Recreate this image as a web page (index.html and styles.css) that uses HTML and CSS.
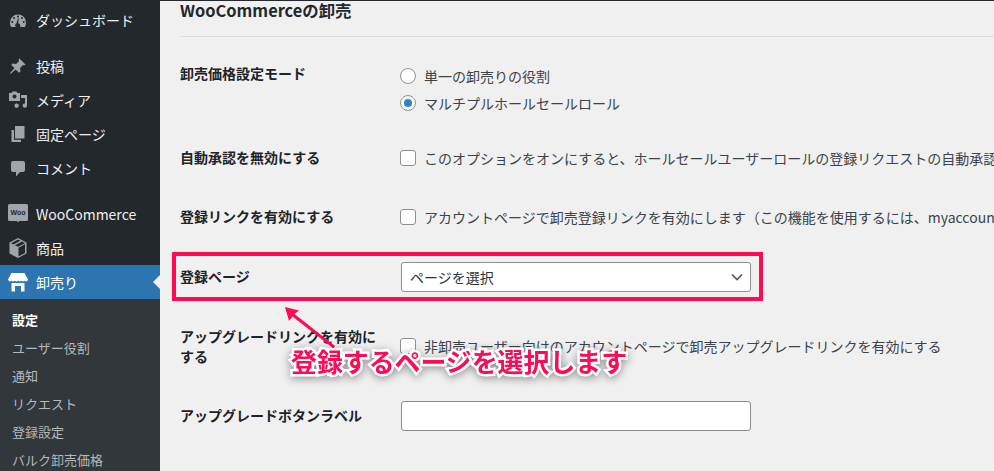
FILE: index.html
```html
<!DOCTYPE html>
<html lang="ja">
<head>
<meta charset="utf-8">
<title>WooCommerceの卸売</title>
<link rel="stylesheet" href="styles.css">
</head>
<body>
<div class="app">
  <nav class="sidebar">
    <ul class="menu">
      <li class="item first"><svg class="ico" viewBox="0 0 20 20"><path fill-rule="evenodd" d="M10 4.500a8 8 0 0 0-8 8c0 1.700.4 3.300 1.200 4.500h4.600a2.600 2.600 0 0 1 .7-3.700l1.500-5 .8.200-.6 4.800a2.600 2.600 0 0 1 1.900 3.700h4.700c.8-1.200 1.200-2.800 1.200-4.500a8 8 0 0 0-8-8zM6 7a1 1 0 1 1 0 2 1 1 0 0 1 0-2zM10 5.500a1 1 0 1 1 0 2 1 1 0 0 1 0-2zM14 7a1 1 0 1 1 0 2 1 1 0 0 1 0-2zM4.300 11a1 1 0 1 1 0 2 1 1 0 0 1 0-2zM15.700 11a1 1 0 1 1 0 2 1 1 0 0 1 0-2z"/></svg>ダッシュボード</li>
      <li class="item gap"><svg class="ico" viewBox="0 0 20 20"><path d="M11.500 2.500l6 6-1.500 1-1-.6-3 3 .5 3.600-1.500 1.200-3.300-3.300L2.500 18l-.6-.6 4.600-5.300-3.200-3.200 1.200-1.500 3.600.5 3-3-.6-1z"/></svg>投稿</li>
      <li class="item"><svg class="ico" viewBox="0 0 20 20"><path fill-rule="evenodd" d="M1 3h2.500l1-1.500h4L9.500 3H12v8H1zM6.500 4.500a2 2 0 1 0 .01 0zM13 5h6v10.500a2.200 2.200 0 1 1-2-2.100V8h-4zM9 13.500a2.200 2.200 0 1 1-2.500 2.500 2.200 2.200 0 0 1 2.500-2.500z"/></svg>メディア</li>
      <li class="item"><svg class="ico" viewBox="0 0 20 20"><path d="M7 2h9.500v12.500H7zM3.500 6H6v9.800h7V18H3.500z"/></svg>固定ページ</li>
      <li class="item"><svg class="ico" viewBox="0 0 20 20"><path d="M5 3h10a2 2 0 0 1 2 2v7a2 2 0 0 1-2 2h-3l-4 4.500V14H5a2 2 0 0 1-2-2V5a2 2 0 0 1 2-2z"/></svg>コメント</li>
      <li class="item gap"><svg class="ico woo" viewBox="0 0 20 20"><path d="M1.500 0h17A1.500 1.500 0 0 1 20 1.500v14a1.500 1.500 0 0 1-1.500 1.500H11l-1 1.500L9 17H1.500A1.500 1.500 0 0 1 0 15.500v-14A1.500 1.500 0 0 1 1.500 0z"/><text x="10" y="11" class="woo-text">Woo</text></svg>WooCommerce</li>
      <li class="item"><svg class="ico" viewBox="0 0 20 20"><path fill-rule="evenodd" d="M10 0l8.500 4.500v11L10 20l-8.500-4.500v-11zM3 5.200l7 3.600 7-3.600-3-1.600-7 3.600-1.600-.8 7-3.600L10 1.600zM10.500 9.800v8.600l6.500-3.500V6.300z"/></svg>商品</li>
      <li class="item active"><svg class="ico shop" viewBox="0 0 20 20"><path fill-rule="evenodd" d="M3.500 1h13L20 7.500a2 2 0 0 1-3.500 1.200 2.400 2.400 0 0 1-3.300 0 2.400 2.400 0 0 1-3.200 0 2.400 2.400 0 0 1-3.200 0 2.400 2.400 0 0 1-3.300 0A2 2 0 0 1 0 7.500zM3.500 11h13v8.500h-3.500V14H7v5.500H3.500z"/></svg>卸売り</li>
    </ul>
    <ul class="submenu">
      <li class="sub current">設定</li>
      <li class="sub">ユーザー役割</li>
      <li class="sub">通知</li>
      <li class="sub">リクエスト</li>
      <li class="sub">登録設定</li>
      <li class="sub">バルク卸売価格</li>
    </ul>
  </nav>
  <main class="content">
    <h2 class="title">WooCommerceの卸売</h2>
    <hr class="rule">
    <div class="row row-mode">
      <div class="label">卸売価格設定モード</div>
      <div class="field stack">
        <label class="opt"><span class="radio"></span>単一の卸売りの役割</label>
        <label class="opt"><span class="radio on"></span>マルチプルホールセールロール</label>
      </div>
    </div>
    <div class="row row-check">
      <div class="label">自動承認を無効にする</div>
      <label class="field opt"><span class="check"></span><span class="nowrap">このオプションをオンにすると、ホールセールユーザーロールの登録リクエストの自動承認を無効にします</span></label>
    </div>
    <div class="row row-link">
      <div class="label">登録リンクを有効にする</div>
      <label class="field opt"><span class="check"></span><span class="nowrap">アカウントページで卸売登録リンクを有効にします（この機能を使用するには、myaccountページが必要です）</span></label>
    </div>
    <div class="row row-page">
      <div class="label">登録ページ</div>
      <div class="field"><div class="select">ページを選択<svg class="chev" viewBox="0 0 12 8"><path d="M1 1.500l5 5 5-5"/></svg></div></div>
    </div>
    <div class="row row-up">
      <div class="label">アップグレードリンクを有効にする</div>
      <label class="field opt"><span class="check"></span><span class="nowrap">非卸売ユーザー向けのアカウントページで卸売アップグレードリンクを有効にする</span></label>
    </div>
    <div class="row row-btn">
      <div class="label">アップグレードボタンラベル</div>
      <div class="field"><div class="input"></div></div>
    </div>
    <div class="callout-box"></div>
    <svg class="callout-arrow" viewBox="0 0 70 70"><path d="M3 3l14 3.500-4.500 3.500L53 42l-1.500 2.500L10.500 12.500 7 17z"/></svg>
    <div class="callout-text">登録するページを選択します</div>
  </main>
</div>
</body>
</html>
```
FILE: styles.css
```css
* { box-sizing: border-box; }
html, body { margin: 0; height: 100%; overflow: hidden; }
body {
  background: #f0f0f1;
  color: #32373c;
  font: 14px/20px "Noto Sans CJK JP", "Liberation Sans", sans-serif;
}
.app { display: flex; width: 994px; height: 471px; overflow: hidden; }
.sidebar { flex: 0 0 160px; background: #23282d; color: #eef0f1; }
.menu, .submenu { list-style: none; margin: 0; padding: 0; }
.item {
  display: flex;
  align-items: center;
  gap: 8px;
  height: 34px;
  padding-left: 8px;
  font-size: 14px;
}
.item.first { margin-top: 3px; }
.item.gap { margin-top: 12px; }
.ico { width: 20px; height: 20px; flex: none; fill: #a0a5aa; }
.woo-text { font: 700 7px "Liberation Sans", sans-serif; fill: #23282d; text-anchor: middle; }
.item.active { position: relative; background: #2c75b0; color: #fff; }
.item.active::after {
  content: "";
  position: absolute;
  right: 0;
  top: 10px;
  border: 7px solid transparent;
  border-right-color: #f0f0f1;
  border-left-width: 0;
}
.shop { fill: #fff; }
.submenu { background: #32373c; padding: 7px 0; height: 172px; }
.sub { height: 28px; padding-left: 12px; line-height: 28px; font-size: 13px; color: #b4b9be; }
.sub.current { color: #fff; font-weight: 700; }

.content { position: relative; flex: 1; min-width: 0; padding: 0 0 0 20px; overflow: hidden; border-top: 1px solid #23282d; }
.title { margin: 0; height: 35px; font-size: 16.400px; line-height: 18px; font-weight: 600; color: #23282d; white-space: nowrap; }
.rule { margin: 0; border: 0; border-top: 1px solid #dcdcde; }
.row { display: flex; }
.label { flex: 0 0 220px; width: 220px; padding-right: 20px; font-size: 14px; font-weight: 700; color: #1d2327; line-height: 21px; }
.field { flex: none; }
.stack { display: flex; flex-direction: column; gap: 5px; margin-top: 2px; }
.opt { display: flex; align-items: center; gap: 8px; height: 22px; color: #3c434a; font-size: 14px; }
.nowrap { white-space: nowrap; }
.radio, .check { flex: none; width: 16px; height: 16px; background: #fff; border: 1px solid #8c8f94; }
.radio { border-radius: 50%; position: relative; }
.radio.on::before { content: ""; position: absolute; inset: 3px; border-radius: 50%; background: #3582c4; }
.check { border-radius: 3px; }
.row-mode { padding-top: 26px; height: 110px; }
.row-check { height: 59px; }
.row-link { height: 56px; }
.row-page { height: 64px; }
.row-page .label { padding-top: 4px; }
.row-page .field { margin-left: 1px; }
.row-up { height: 75px; }
.row-up .label { line-height: 20px; }
.row-up .opt { margin-top: 9px; }
.row-btn .label { padding-top: 4px; }
.row-btn .field { margin-left: 1px; }
.select {
  position: relative;
  width: 350px;
  height: 30px;
  padding-left: 8px;
  line-height: 28px;
  font-size: 14px;
  color: #2c3338;
  background: #fff;
  border: 1px solid #8c8f94;
  border-radius: 3px;
}
.chev { position: absolute; right: 7px; top: 10px; width: 12px; height: 8px; fill: none; stroke: #50575e; stroke-width: 1.600; }
.input { width: 350px; height: 30px; background: #fff; border: 1px solid #8c8f94; border-radius: 3px; }

.callout-box { position: absolute; left: 12px; top: 251px; width: 591px; height: 49px; border: 4px solid #ff0a55; }
.callout-arrow { position: absolute; left: 122px; top: 303px; width: 70px; height: 70px; fill: #ff0a55; }
.callout-text {
  position: absolute;
  left: 131px;
  top: 342px;
  font-size: 25.900px;
  line-height: 36px;
  font-weight: 700;
  white-space: nowrap;
  color: #ff0a55;
  -webkit-text-stroke: 5px #fff;
  paint-order: stroke fill;
  filter: drop-shadow(0 2px 4px rgba(0,0,0,.4));
}
```
